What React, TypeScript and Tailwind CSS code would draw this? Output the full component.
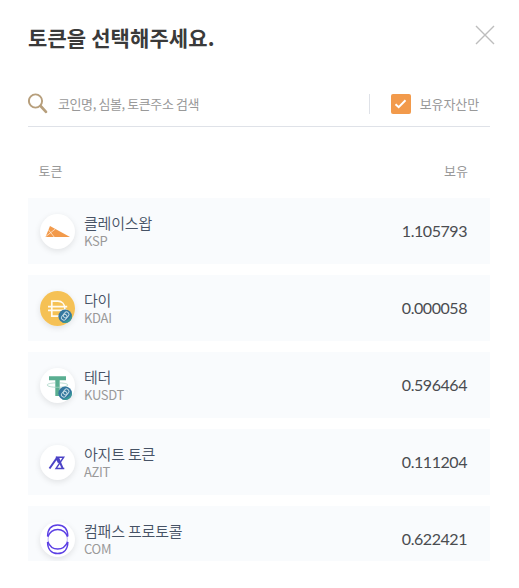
import { useState } from 'react'
import type { ReactNode } from 'react'

interface Token {
  name: string
  symbol: string
  balance: string
  icon: ReactNode
}

// Small chain badge drawn over bridged tokens
function BridgeBadge() {
  return (
    <g>
      <circle cx="25.2" cy="25.2" r="6.8" fill="#34779f" />
      <path d="M25.2 32a6.8 6.8 0 0 0 6.500-8.800C30 28.500 27 30 22 31.200a6.800 6.800 0 0 0 3.200.8z" fill="#3b9b98" />
      <g fill="none" stroke="#c3dbe4" strokeWidth="1" transform="rotate(-50 25.200 25.200)">
        <rect x="20.800" y="22.800" width="6" height="4.600" rx="2" />
        <rect x="23.800" y="22.800" width="6" height="4.600" rx="2" />
      </g>
    </g>
  )
}

function KspIcon() {
  return (
    <svg viewBox="0 0 35 35" className="h-full w-full">
      <path d="M10 12 30 23H5.500z" fill="#f29a4b" />
      <path d="m8.200 15.500 6 7.500M5.800 22.500l9.500-7.500" stroke="#fff3e6" strokeWidth=".7" />
    </svg>
  )
}

function KdaiIcon() {
  return (
    <svg viewBox="0 0 35 35" className="h-full w-full">
      <circle cx="17.500" cy="17.500" r="17.500" fill="#f5c155" />
      <path
        d="M11.800 25.200V10.200h6c4.200 0 7 3 7 7.300s-2.800 7.700-7 7.700zM8 15.700h19.200M8 19.300h19.200"
        fill="none"
        stroke="#fffaf0"
        strokeWidth="1.700"
      />
      <BridgeBadge />
    </svg>
  )
}

function KusdtIcon() {
  return (
    <svg viewBox="0 0 35 35" className="h-full w-full">
      <path d="M9 8.200h17v4H19.700V28h-4.400V12.200H9z" fill="#5aae91" />
      <path
        d="M15 14.900c-4.500.2-7.800 1-7.800 2.100 0 1.300 4.600 2.300 10.300 2.300s10.300-1 10.300-2.300c0-1.100-3.300-1.900-7.800-2.100"
        fill="none"
        stroke="#a5d3c3"
        strokeWidth=".8"
      />
      <BridgeBadge />
    </svg>
  )
}

function AzitIcon() {
  return (
    <svg viewBox="0 0 35 35" className="h-full w-full" fill="none" stroke="#4c43c6">
      <path d="m9.500 23.500 7.200-10.300 2.200 4.600" strokeWidth="2" />
      <path d="M15.800 12.200h7.900l-7.700 11.300h8.300" strokeWidth="1.400" />
      <path d="m18 12.500 4.600 10.800" strokeWidth="2" />
    </svg>
  )
}

function ComIcon() {
  return (
    <svg viewBox="0 0 35 35" className="h-full w-full" fill="none" stroke="#5b3fe4">
      <path d="M7.600 14.300C7.600 7 11.500 2.900 17.700 2.900S27.800 7 27.800 14.300" strokeWidth="1.500" />
      <path d="M7.600 19.900C7.600 27.200 11.500 31.600 17.700 31.600S27.800 27.200 27.800 19.900" strokeWidth="1.500" />
      <path d="M7.800 14.800C9.600 10.200 13 7.500 17.700 7.500s8.100 2.700 9.900 7.300" strokeWidth="1.500" />
      <path d="M7.800 19.700c1.800 4.600 5.200 7.300 9.900 7.300s8.100-2.700 9.900-7.300" strokeWidth="1.500" />
      <path d="M8.500 14.500c-.5 2-.5 4 0 5.500M26.900 14.500c.5 2 .5 4 0 5.500" strokeWidth=".7" strokeOpacity=".6" />
    </svg>
  )
}

const tokens: Token[] = [
  { name: '클레이스왑', symbol: 'KSP', balance: '1.105793', icon: <KspIcon /> },
  { name: '다이', symbol: 'KDAI', balance: '0.000058', icon: <KdaiIcon /> },
  { name: '테더', symbol: 'KUSDT', balance: '0.596464', icon: <KusdtIcon /> },
  { name: '아지트 토큰', symbol: 'AZIT', balance: '0.111204', icon: <AzitIcon /> },
  { name: '컴패스 프로토콜', symbol: 'COM', balance: '0.622421', icon: <ComIcon /> },
]

function TokenRow({ token }: { token: Token }) {
  return (
    <li className="flex h-[66px] shrink-0 items-center bg-[#f9fbfd] pr-[23px] pl-3">
      <div className="h-[35px] w-[35px] shrink-0 rounded-full bg-white shadow-[0_2px_6px_rgba(0,0,0,0.1)]">
        {token.icon}
      </div>
      <div className="ml-[9px] flex-1">
        <p className="text-[15px] leading-[18px] font-[350] tracking-[-0.2px] text-[#465265]">{token.name}</p>
        <p className="text-[13px] leading-[17px] tracking-[-0.3px] text-[#999]">{token.symbol}</p>
      </div>
      <span className="font-['Lato',sans-serif] text-base tracking-[-0.45px] text-[#4a4c50]">
        {token.balance}
      </span>
    </li>
  )
}

export default function App() {
  const [query, setQuery] = useState('')
  const [ownedOnly, setOwnedOnly] = useState(true)

  const visible = tokens.filter((token) =>
    `${token.name} ${token.symbol}`.toLowerCase().includes(query.toLowerCase())
  )

  return (
    <div className="flex h-[588px] w-[519px] flex-col bg-white pr-[29px] pb-[27px] pl-7 font-['Noto_Sans_CJK_KR',sans-serif]">
      {/* Header */}
      <header className="flex h-[81px] shrink-0 items-start justify-between">
        <h1 className="mt-[22px] text-[21px] leading-[30px] font-bold tracking-[0.1px] text-[#3a3a3a]">
          토큰을 선택해주세요.
        </h1>
        <button type="button" aria-label="닫기" className="mt-[25px] -mr-[5px]">
          <svg width="20" height="20" viewBox="0 0 20 20" fill="none" stroke="#bdbdbd" strokeWidth="1.400">
            <path d="m1 1 18 18M19 1 1 19" />
          </svg>
        </button>
      </header>

      {/* Search */}
      <div className="flex h-[46px] shrink-0 items-center border-b border-[#dfe2e8]">
        <svg width="20" height="21" viewBox="0 0 20 21" fill="none" stroke="#b79f7c" className="shrink-0">
          <circle cx="7.500" cy="8" r="6.600" strokeWidth="1.900" />
          <path d="m12.600 13 5.400 5.800" strokeWidth="2.700" strokeLinecap="round" />
        </svg>
        <input
          type="text"
          value={query}
          onChange={(e) => setQuery(e.target.value)}
          placeholder="코인명, 심볼, 토큰주소 검색"
          className="ml-2.5 min-w-0 flex-1 text-[13px] tracking-[-0.4px] text-[#333] outline-none placeholder:text-[#999]"
        />
        <label className="flex h-5 items-center border-l border-[#dfe2e8] pr-[11px] pl-[21px]">
          <input
            type="checkbox"
            checked={ownedOnly}
            onChange={(e) => setOwnedOnly(e.target.checked)}
            className="peer sr-only"
          />
          <span className="flex h-5 w-5 items-center justify-center rounded-[2px] bg-[#f29a4b]">
            {ownedOnly && (
              <svg width="13" height="10" viewBox="0 0 12 10" fill="none" stroke="#fff" strokeWidth="2">
                <path d="m1 5.200 3.200 3L11 1.200" />
              </svg>
            )}
          </span>
          <span className="ml-[9px] text-[13px] tracking-[-0.1px] text-[#999]">보유자산만</span>
        </label>
      </div>

      {/* Column titles */}
      <div className="flex h-[71px] shrink-0 items-center justify-between pt-[17px] pr-[22px] pl-[10.5px] text-[13px] text-[#999]">
        <span>토큰</span>
        <span>보유</span>
      </div>

      {/* Token list */}
      <ul className="flex min-h-0 flex-1 flex-col gap-[11px] overflow-hidden">
        {visible.map((token) => (
          <TokenRow key={token.symbol} token={token} />
        ))}
      </ul>
    </div>
  )
}
